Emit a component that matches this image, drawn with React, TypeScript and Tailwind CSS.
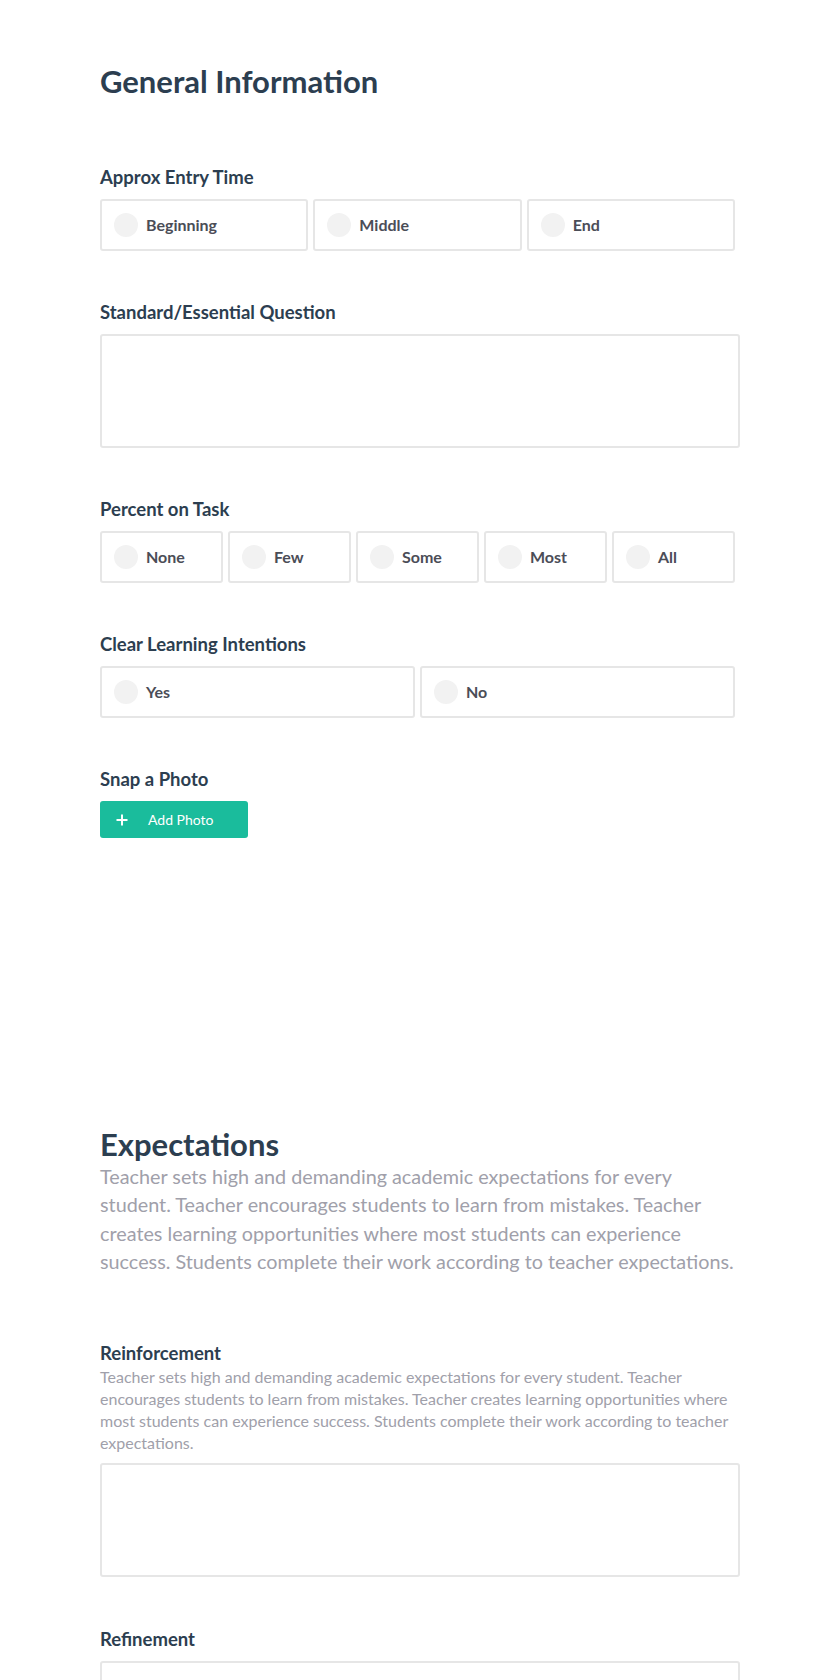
import React from "react";

const Label = ({ children }: { children: React.ReactNode }) => (
  <div className="text-[18.5px] leading-[22px] font-bold text-[#2c3e50] mb-[11px]">{children}</div>
);

const Option = ({ text }: { text: string }) => (
  <div className="pr-[5px]">
    <div className="h-[52px] border-2 border-[#e6e6e6] rounded-[3px] flex items-center pl-[12px]">
      <div className="w-[24px] h-[24px] rounded-full bg-[#f2f2f2] shrink-0" />
      <span className="ml-[8px] text-[16px] leading-[20px] font-bold text-[#4b4d57]">{text}</span>
    </div>
  </div>
);

const RadioRow = ({ options, cols }: { options: string[]; cols: string }) => (
  <div className={`grid ${cols}`}>
    {options.map((o) => (
      <Option key={o} text={o} />
    ))}
  </div>
);

const TextArea = () => (
  <div className="h-[114px] border-2 border-[#e6e6e6] rounded-[3px] bg-white" />
);

const desc =
  "Teacher sets high and demanding academic expectations for every student. Teacher encourages students to learn from mistakes. Teacher creates learning opportunities where most students can experience success. Students complete their work according to teacher expectations.";

export default function App() {
  return (
    <div className="bg-white h-[1680px] overflow-hidden font-['Lato','Noto_Sans',sans-serif]">
      <div className="w-[640px] mx-auto pt-[63px]">
        <h1 className="text-[31px] leading-[36px] font-bold text-[#2c3e50]">General Information</h1>

        <div className="mt-[67px] mb-[50px]">
          <Label>Approx Entry Time</Label>
          <RadioRow options={["Beginning", "Middle", "End"]} cols="grid-cols-3" />
        </div>

        <div className="mb-[50px]">
          <Label>Standard/Essential Question</Label>
          <TextArea />
        </div>

        <div className="mb-[50px]">
          <Label>Percent on Task</Label>
          <RadioRow options={["None", "Few", "Some", "Most", "All"]} cols="grid-cols-5" />
        </div>

        <div className="mb-[50px]">
          <Label>Clear Learning Intentions</Label>
          <RadioRow options={["Yes", "No"]} cols="grid-cols-2" />
        </div>

        <div>
          <Label>Snap a Photo</Label>
          <button className="w-[148px] h-[37px] rounded-[3px] bg-[#1abc9c] text-white flex items-center pl-[16px]">
            <svg width="12" height="12" viewBox="0 0 12 12" className="shrink-0">
              <path d="M6 0.5v11M0.5 6h11" stroke="white" strokeWidth="2" />
            </svg>
            <span className="ml-[20px] text-[14px]">Add Photo</span>
          </button>
        </div>

        <h2 className="mt-[288px] text-[31px] leading-[36px] font-bold text-[#2c3e50]">Expectations</h2>
        <p className="w-[638px] text-[19.8px] leading-[28.4px] text-[#a0a0aa]">{desc}</p>

        <div className="mt-[66px] mb-[51px]">
          <div className="text-[18.5px] leading-[22px] font-bold text-[#2c3e50]">Reinforcement</div>
          <p className="mt-[2px] text-[16px] leading-[22px] text-[#a0a0aa]">{desc}</p>
          <div className="mt-[9px]">
            <TextArea />
          </div>
        </div>

        <div>
          <Label>Refinement</Label>
          <TextArea />
        </div>
      </div>
    </div>
  );
}
